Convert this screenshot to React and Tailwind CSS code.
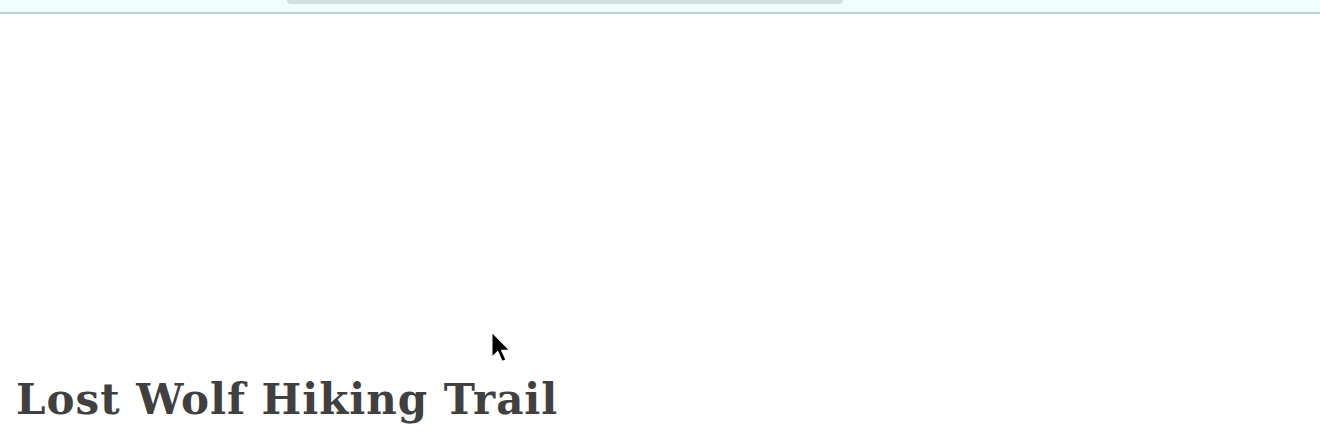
import React from "react";

function Cursor() {
  return (
    <svg
      className="absolute left-[490px] top-[330px]"
      width="26"
      height="36"
      viewBox="0 0 22 30"
    >
      <path
        d="M1.5 1.5 L1.5 23 L6.5 18.2 L10.2 26.5 L13.6 25 L10 17 L16.8 17 Z"
        fill="#000"
        stroke="#fff"
        strokeWidth="1.2"
        strokeLinejoin="round"
      />
    </svg>
  );
}

export default function App() {
  return (
    <div className="relative h-[442px] w-[1320px] overflow-hidden bg-white">
      <header className="relative h-[14px] border-b-2 border-[#b8d2ce] bg-[#effffe]">
        <div className="ml-[287px] h-[4px] w-[556px] rounded-b-full bg-[#d3e0df]" />
      </header>

      <main className="flex h-[428px] flex-col justify-end px-4 pb-[21px]">
        <h1
          className="text-[42px] font-bold leading-none tracking-[1px] text-[#404040]"
          style={{ fontFamily: '"DejaVu Serif", serif' }}
        >
          Lost Wolf Hiking Trail
        </h1>
      </main>

      <Cursor />
    </div>
  );
}
